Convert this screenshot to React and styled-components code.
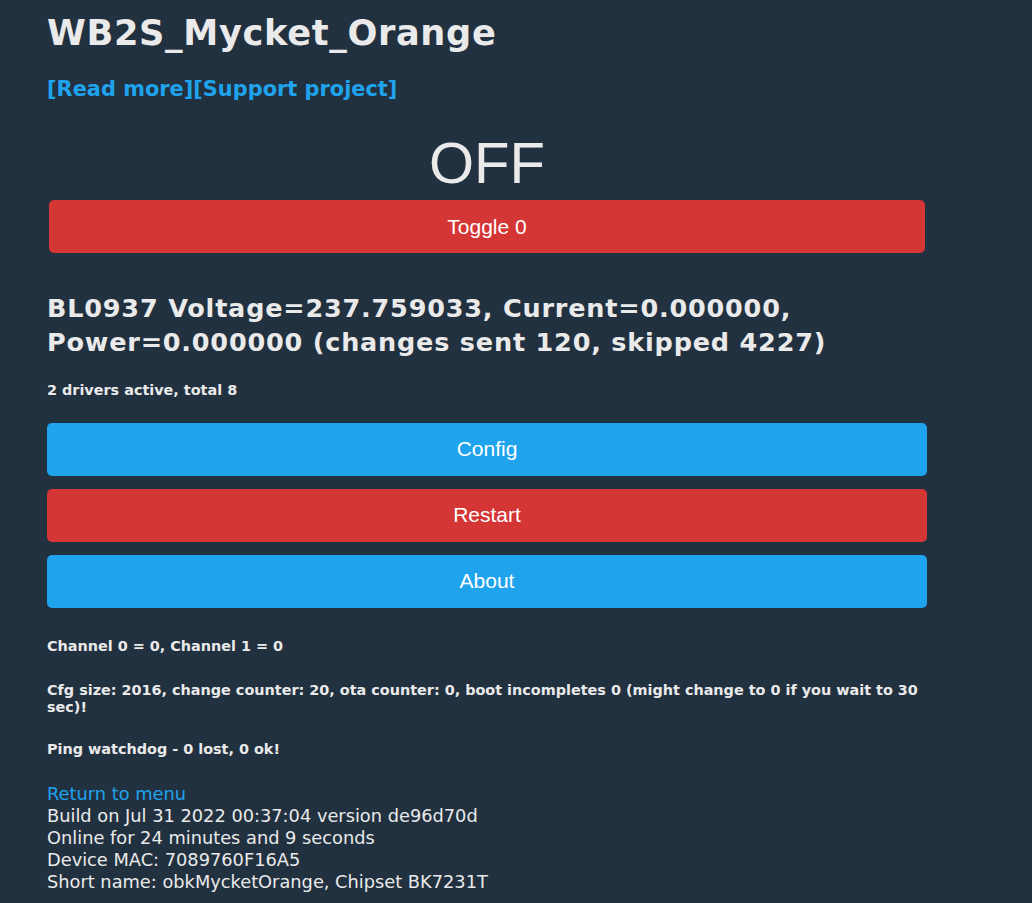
import React from "react";
import styled, { createGlobalStyle } from "styled-components";

const GlobalStyle = createGlobalStyle`
  body {
    margin: 0;
    background-color: #223140;
    color: #eaeaea;
    font-family: "DejaVu Sans", Verdana, sans-serif;
  }
`;

const App = () => {
  return (
    <>
      <GlobalStyle />
      <Page>
        <Title>WB2S_Mycket_Orange</Title>
        <Links>
          <a href="#">[Read more]</a>
          <a href="#">[Support project]</a>
        </Links>
        <State>OFF</State>
        <Form>
          <Button color="#d43535">Toggle 0</Button>
        </Form>
        <Readout>
          BL0937 Voltage=237.759033, Current=0.000000, Power=0.000000 (changes
          sent 120, skipped 4227)
        </Readout>
        <Small top="23.6px">2 drivers active, total 8</Small>
        <Buttons>
          <Button color="#1fa3ec">Config</Button>
          <Button color="#d43535">Restart</Button>
          <Button color="#1fa3ec">About</Button>
        </Buttons>
        <Small top="30.5px">Channel 0 = 0, Channel 1 = 0</Small>
        <Small top="27px">
          Cfg size: 2016, change counter: 20, ota counter: 0, boot incompletes 0
          (might change to 0 if you wait to 30 sec)!
        </Small>
        <Small top="25px">Ping watchdog - 0 lost, 0 ok!</Small>
        <Footer>
          <MenuLink href="#">Return to menu</MenuLink>
          <div>Build on Jul 31 2022 00:37:04 version de96d70d</div>
          <div>Online for 24 minutes and 9 seconds</div>
          <div>Device MAC: 7089760F16A5</div>
          <div>Short name: obkMycketOrange, Chipset BK7231T</div>
        </Footer>
      </Page>
    </>
  );
};

export default App;

const Page = styled.div`
  width: 880px;
  padding: 14px 0 20px 47px;
  text-align: left;
`;

const Title = styled.h1`
  margin: 0;
  font-size: 35.2px;
  line-height: 38px;
  letter-spacing: 0.65px;
  font-weight: 700;
`;

const Links = styled.h3`
  margin: 24.75px 0 0;
  font-size: 20.9px;
  line-height: 24px;
  font-weight: 700;
  a {
    color: #1fa3ec;
    text-decoration: none;
  }
`;

const State = styled.div`
  margin-top: 29.25px;
  text-align: center;
  font-family: "Liberation Sans", Arial, sans-serif;
  font-size: 58px;
  line-height: 66px;
`;

const Form = styled.div`
  margin: 4px 2px 0;
`;

const Button = styled.button`
  display: block;
  width: 100%;
  height: 53px;
  border: 0;
  border-radius: 5px;
  background-color: ${(p) => p.color};
  color: #ffffff;
  font-family: "Liberation Sans", Arial, sans-serif;
  font-size: 21px;
  cursor: pointer;
`;

const Readout = styled.h2`
  margin: 37.9px 0 0;
  font-size: 25.5px;
  line-height: 34px;
  letter-spacing: 0.8px;
  font-weight: 700;
`;

const Small = styled.h5`
  margin: ${(p) => p.top} 0 0;
  font-size: 14.4px;
  line-height: 17px;
  font-weight: 700;
`;

const Buttons = styled.div`
  margin-top: 23.5px;
  display: flex;
  flex-direction: column;
  gap: 13px;
`;

const Footer = styled.div`
  margin-top: 24.3px;
  font-size: 17.8px;
  line-height: 22px;
`;

const MenuLink = styled.a`
  display: block;
  color: #1fa3ec;
  text-decoration: none;
`;
